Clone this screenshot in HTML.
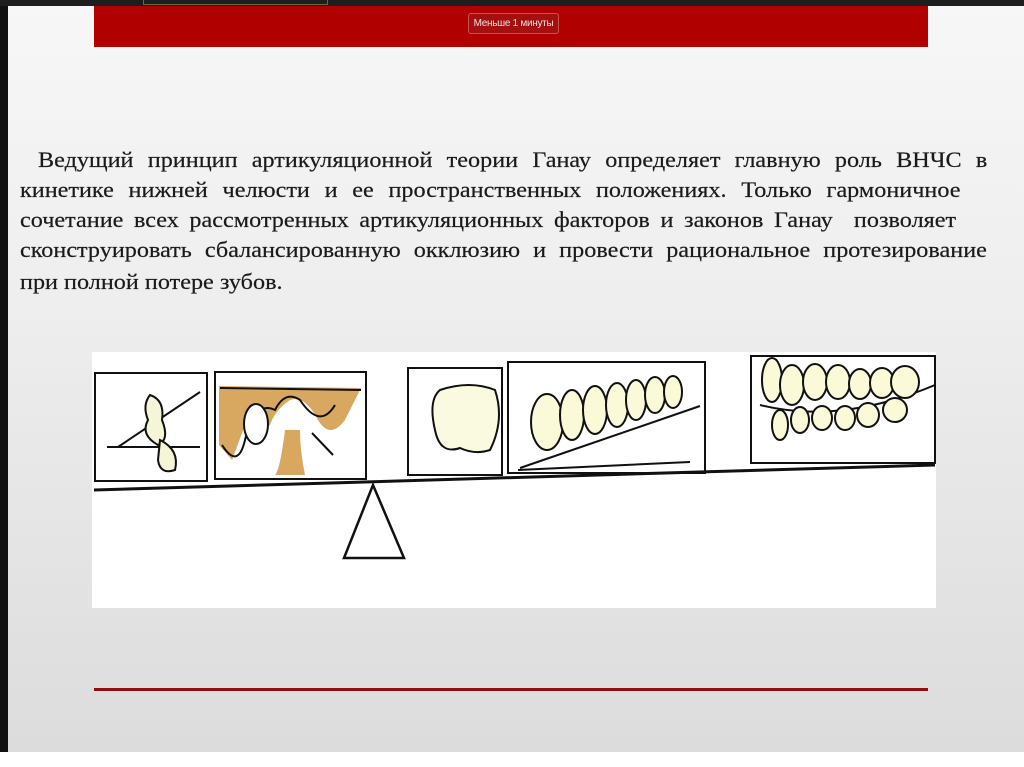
<!DOCTYPE html>
<html><head><meta charset="utf-8"><style>
*{margin:0;padding:0;box-sizing:border-box}
body{width:1024px;height:767px;overflow:hidden;position:relative;background:#fff;font-family:"Liberation Serif",serif}
#slide{position:absolute;left:0;top:0;width:1024px;height:752px;background:linear-gradient(180deg,#f7f7f7 0%,#eeeeee 40%,#dcdcdc 100%)}
#lb{position:absolute;left:0;top:0;width:8px;height:752px;background:#111}
#tb{position:absolute;left:0;top:0;width:1024px;height:6px;background:#1e1e1e}
#tb i{position:absolute;top:0;left:143px;width:185px;height:5px;border:1px solid #6a6a40;border-top:none}
#red{position:absolute;left:94px;top:6px;width:834px;height:41px;background:#b00000}
#btn{position:absolute;left:468px;top:13px;width:91px;height:21px;border:1px solid #d05050;border-radius:3px;background:#a41010;color:#f0dede;font:10px "Liberation Sans",sans-serif;text-align:center;line-height:19px;white-space:nowrap;overflow:hidden;letter-spacing:-0.3px}
.ln{position:absolute;left:20px;font-size:22px;color:#1a1a1a;text-align:justify;text-align-last:justify;white-space:nowrap;line-height:24px;-webkit-text-stroke:0.2px #1a1a1a;transform:scaleX(1.1);transform-origin:0 0}
#img{position:absolute;left:92px;top:352px;width:844px;height:256px;background:#fff}
#rl{position:absolute;left:94px;top:688px;width:834px;height:3px;background:#8e0f12}
</style></head><body>
<div id="slide"></div><div id="lb"></div><div id="tb"><i></i></div>
<div id="red"></div><div id="btn">Меньше 1 минуты</div>
<div class="ln" style="top:148px;left:38px;width:863px">Ведущий принцип артикуляционной теории Ганау определяет главную роль ВНЧС в</div>
<div class="ln" style="top:178px;width:855px">кинетике нижней челюсти и ее пространственных положениях. Только гармоничное</div>
<div class="ln" style="top:208px;width:851px">сочетание всех рассмотренных артикуляционных факторов и законов Ганау&nbsp; позволяет</div>
<div class="ln" style="top:238px;width:879px">сконструировать сбалансированную окклюзию и провести рациональное протезирование</div>
<div class="ln" style="top:270px;width:879px;text-align-last:left">при полной потере зубов.</div>
<div id="img"><svg width="844" height="256" viewBox="92 352 844 256" fill="none" stroke="#111" stroke-width="2">
<rect x="95" y="373" width="112" height="108"/>
<rect x="215" y="372" width="151" height="107"/>
<path d="M219 386 L361 388 L345 420 Q330 440 318 420 Q305 395 290 400 Q275 410 270 425 Q250 440 245 425 L232 460 L219 445Z" fill="#d8a860" stroke="none"/>
<path d="M285 430 Q280 470 275 475 L305 475 Q300 450 300 430Z" fill="#d8a860" stroke="none"/>
<path d="M220 388 L361 390 M222 445 Q238 470 245 440 Q255 400 275 410 Q285 390 300 400 Q320 430 335 405" />
<ellipse cx="256" cy="424" rx="12" ry="20" fill="#fff"/>
<path d="M312 433 L333 455 M118 447 L200 392 M107 447 L200 447"/>
<path d="M150 395 Q165 400 162 420 Q170 440 158 445 Q140 435 148 420 Q142 405 150 395Z" fill="#f5f5d8"/>
<path d="M160 440 Q180 450 175 470 Q160 475 158 460Z" fill="#f5f5d8"/>
<rect x="408" y="368" width="94" height="107"/>
<path d="M440 390 Q470 380 495 390 Q505 420 490 450 Q475 455 460 448 Q440 455 435 430 Q428 400 440 390Z" fill="#fafae0"/>
<rect x="508" y="362" width="197" height="111"/>
<path d="M520 468 L700 406 M518 470 L690 462"/>
<g fill="#fafad8"><ellipse cx="547" cy="422" rx="16" ry="28"/><ellipse cx="572" cy="415" rx="12" ry="25"/><ellipse cx="595" cy="410" rx="12" ry="24"/><ellipse cx="617" cy="405" rx="11" ry="22"/><ellipse cx="636" cy="400" rx="10" ry="20"/><ellipse cx="655" cy="395" rx="10" ry="18"/><ellipse cx="673" cy="392" rx="9" ry="16"/></g>
<rect x="751" y="356" width="184" height="107"/>
<path d="M760 405 Q840 425 935 385"/>
<g fill="#fafad8"><ellipse cx="772" cy="380" rx="10" ry="22"/><ellipse cx="792" cy="385" rx="12" ry="20"/><ellipse cx="815" cy="382" rx="12" ry="18"/><ellipse cx="838" cy="382" rx="12" ry="17"/><ellipse cx="860" cy="384" rx="11" ry="15"/><ellipse cx="882" cy="383" rx="12" ry="15"/><ellipse cx="905" cy="382" rx="14" ry="16"/><ellipse cx="780" cy="425" rx="8" ry="15"/><ellipse cx="800" cy="420" rx="9" ry="13"/><ellipse cx="822" cy="418" rx="10" ry="12"/><ellipse cx="845" cy="418" rx="10" ry="12"/><ellipse cx="868" cy="415" rx="11" ry="12"/><ellipse cx="895" cy="410" rx="12" ry="12"/></g>
<path d="M94 490 L935 465" stroke-width="3"/>
<path d="M373 485 L344 558 L404 558Z" stroke-width="2.5"/>
</svg></div>
<div id="rl"></div>
</body></html>
